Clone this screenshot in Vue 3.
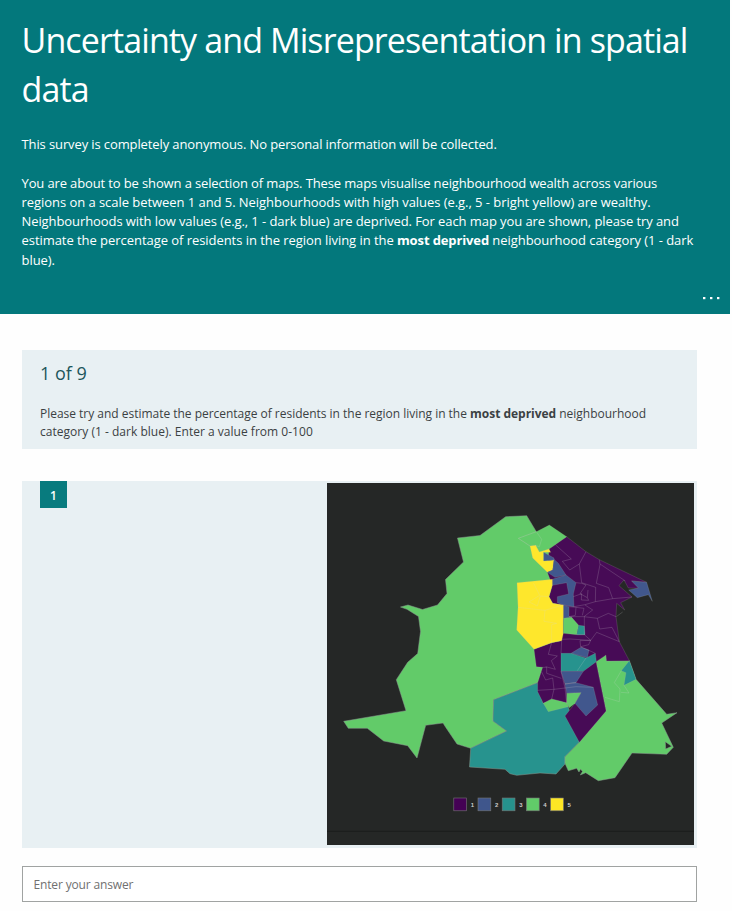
<script setup>
const intro = [
  { t: 'You are about to be shown a selection of maps. These maps visualise neighbourhood wealth across various', c: 'a1' },
  { t: 'regions on a scale between 1 and 5. Neighbourhoods with high values (e.g., 5 - bright yellow) are wealthy.', c: 'a2' },
  { t: 'Neighbourhoods with low values (e.g., 1 - dark blue) are deprived. For each map you are shown, please try and', c: 'a3' },
]
const legend = ['#440154', '#3f568c', '#26928d', '#61cb69', '#fde725']

// Regions drawn on a fine grid: three units per pixel, origin at 500,500
const regions = [
  ['p', '147,147 200,110 258,155 298,179 440,247 395,243 418,265 385,264 372,240 357,257 396,291 362,308 374,330 350,310 348,350 358,425 388,482 320,483 318,465 288,485 318,633 238,727 195,648 225,610 200,610 155,597 130,610 113,575 113,548 128,502 109,500 102,448 155,428 185,422 190,315 158,310 147,290 157,256 142,217'],
  ['g', '55,115 109,95 148,75 200,110 147,147 118,156 107,136 90,138'],
  ['y', '90,138 107,136 118,156 147,147 152,157 131,157 131,182 162,180 158,210 142,217 98,174'],
  ['b', '131,157 162,174 162,180 131,183'],
  ['b', '162,178 175,190 198,225 165,232 142,217 158,210'],
  ['b', '157,238 198,225 228,248 220,282 222,320 190,315 172,308 172,290 206,282 200,248 157,256'],
  ['b', '190,315 207,320 207,350 215,352 190,356'],
  ['b', '395,243 440,247 457,304 445,284 412,293 386,270 415,264'],
  ['y', '51,248 157,238 157,256 147,290 158,310 190,315 190,400 185,422 155,428 102,448 50,390 54,322'],
  ['g', '190,355 215,352 236,376 230,404 190,400'],
  ['t', '236,376 253,378 255,404 230,404'],
  ['b', '213,460 243,442 267,450 262,473'],
  ['t', '183,460 213,460 258,474 286,460 289,485 250,514 183,514'],
  ['b', '183,514 250,514 228,548 195,552'],
  ['b', '195,552 228,548 280,562 293,615 258,648 225,610 243,578 200,580'],
  ['g', '200,580 243,578 225,610 208,623 200,610'],
  ['g', '130,610 155,597 200,608 205,620 145,635'],
  ['t', '388,482 408,538 372,556 378,518 364,512'],
]
const borders = [
  '90,138 55,115 109,95 125,118 118,140 105,136',
  '166,134 214,177 187,184 209,210 238,192 258,155',
  '238,192 245,248 287,262 286,305',
  '298,179 300,194 289,250 326,263 338,296 396,291',
  '300,192 376,243',
  '228,248 245,250 258,255 240,281 262,293 264,270',
  '220,290 245,281 244,300 266,301 262,293',
  '222,320 255,314 286,305 338,296',
  '207,320 228,322 226,346 207,350 252,350 278,330 255,315',
  '228,322 252,325 247,346',
  '252,350 292,355 325,340 348,350',
  '253,350 253,404',
  '292,355 299,387 336,382 358,425 290,397 272,421',
  '230,404 253,404 272,421 240,422 242,440 286,460',
  '185,418 210,417 272,421 266,434 242,440',
  '185,422 183,460', '155,428 145,463 172,468 154,482 166,508 137,500',
  '128,502 140,502 140,520 184,535', '125,516 137,540 158,534 162,568 113,571',
  '162,568 195,564', '183,514 195,564 200,610', '162,568 155,597',
  '195,552 228,548', '258,474 232,512', '195,564 228,560 280,562',
  '54,322 135,331 190,315', '101,250 119,286 87,306 112,318 121,288 146,290',
  '135,331 132,364 170,370 155,374 155,428',
  '364,512 343,548 360,567 358,605 315,592', '372,556 387,579 363,577',
  '349,350 368,336',
]
</script>

<template>
  <main class="page">
    <header class="hero">
      <h1><span class="line">Uncertainty and Misrepresentation in spatial</span><span class="line">data</span></h1>
      <div class="copy">
        <p class="first"><span class="line a0">This survey is completely anonymous. No personal information will be collected.</span></p>
        <p>
          <span v-for="l in intro" :key="l.c" class="line" :class="l.c">{{ l.t }}</span>
          <span class="line a4">estimate the percentage of residents in the region living in the <b>most deprived</b> neighbourhood category (1 - dark</span>
          <span class="line a4">blue).</span>
        </p>
      </div>
      <button class="more" aria-label="More options">
        <svg width="18" height="4" viewBox="0 0 18 4"><rect x="1" y="1" width="2.4" height="2.2" /><rect x="8" y="1" width="2.4" height="2.2" /><rect x="15" y="1" width="2.4" height="2.2" /></svg>
      </button>
    </header>

    <section class="section-card">
      <h2>1 of 9</h2>
      <p>
        <span class="line s1">Please try and estimate the percentage of residents in the region living in the <b>most deprived</b> neighbourhood</span>
        <span class="line s2">category (1 - dark blue). Enter a value from 0-100</span>
      </p>
    </section>

    <section class="question">
      <span class="badge">1</span>
      <svg class="map" width="367" height="362" viewBox="327 483 367 362">
        <rect x="327" y="483" width="367" height="362" fill="#252726" />
        <path d="M327 831.3H694" stroke="#1b1d1c" />
        <g stroke="#8b9b90" stroke-width=".5">
          <polygon class="g" points="505.7,516.7 526.7,515.7 536.3,531.7 549,549 560,580 560,640 545,680 537.7,682.7 493.7,699.7 493,721 506.7,731 470.7,748.3 457,744 445.7,727.3 443,723 425.7,725.3 417,758 407.7,745.7 383.7,741 367.3,728.3 348.3,728.3 343.7,721.3 406,710.7 396.3,679.7 407.7,662.3 417.7,653.5 420.5,631.5 418.5,616.5 407,609.3 400.5,607 408,605 422.5,609.5 437.5,605 447,593.5 445.5,579.5 463.5,562 457.5,538 480,535.5" />
          <polygon class="t" points="470.7,748.3 506.7,731 493,721 493.7,699.7 537.7,682.7 543,703 566,700 579.3,742.3 565,756.7 565,764 556,774 540,773 516.7,775.3 510,773.7 505,769.3 469.5,767" />
          <polygon class="g" points="579.3,742.3 606,711 596,661.7 606,655 606.7,661 629.3,660.7 636,679.3 666.7,714.3 677,712.7 661.7,723 673.3,747.3 666.7,754.3 632,753 615,777.7 598.3,780.7 585.7,772.7 580.3,775 582.5,771.5 580.5,769 579,772 576.7,768.3 568.3,770.7 565,763.3 565,756.7" />
          <polygon fill="#252726" points="665.3,741.7 671.7,746.3 665.7,749" />
        </g>
        <g transform="translate(500 500) scale(.33333)" stroke-width="1.3">
          <polygon v-for="(r, i) in regions" :key="i" :class="r[0]" :points="r[1]" stroke="#aeb0a0" stroke-opacity=".45" />
          <polyline v-for="(b, i) in borders" :key="'b' + i" :points="b" fill="none" stroke="#d5d5d5" stroke-opacity=".34" stroke-width="1.7" />
        </g>
        <g v-for="(c, i) in legend" :key="c">
          <rect :x="453.8 + i * 24.2" y="798" width="12.8" height="12.8" :fill="c" stroke="#777" stroke-width=".6" />
          <text :x="472.4 + i * 24.2" y="807" class="key">{{ i + 1 }}</text>
        </g>
      </svg>
    </section>
    <input class="answer" type="text" placeholder="Enter your answer" />
  </main>
</template>

<style>
body { margin: 0; background: #fefefe; }
</style>

<style scoped>
.page { box-sizing: border-box; height: 911px; overflow: hidden; display: flex; flex-direction: column; font-family: "Open Sans", "Noto Sans", sans-serif; }
.line { display: block; width: max-content; white-space: nowrap; }
h1, h2, p { margin: 0; font-weight: 400; }
.hero { box-sizing: border-box; width: 730px; height: 314px; flex: none; padding: 16px 10px 0 21.5px; background: #03787c; color: #fff; display: flex; flex-direction: column; }
h1 { font-size: 34px; line-height: 49px; letter-spacing: -0.89px; }
.copy { margin-top: 21px; font-size: 13px; line-height: 19.3px; }
.first { margin-bottom: 19.3px; }
.a0 { letter-spacing: -0.11px; }
.a1 { letter-spacing: -0.13px; }
.a2 { letter-spacing: -0.05px; }
.a3 { letter-spacing: -0.085px; }
.a4 { letter-spacing: -0.05px; }
.a4 b { letter-spacing: -0.12px; }
.more { align-self: flex-end; margin-top: 26px; padding: 0; border: 0; background: none; display: flex; fill: #fff; }
.section-card { box-sizing: border-box; width: 675px; height: 99px; flex: none; margin: 36px 0 0 22px; padding: 10px 18px; background: #e8f0f3; color: #3b4143; }
h2 { font-size: 18px; line-height: 27px; color: #1c565b; }
.section-card p { margin-top: 18px; font-size: 12px; line-height: 18.3px; }
.s1 { letter-spacing: -0.02px; }
.s2 { letter-spacing: 0.02px; }
.question { box-sizing: border-box; width: 675px; height: 367px; flex: none; margin: 32px 0 0 22px; padding: 0 3px 0 18px; background: #e8f0f3; display: flex; justify-content: space-between; }
.badge { width: 27px; height: 27px; background: #087b7e; color: #fff; font-size: 12px; font-weight: 600; line-height: 29px; text-align: center; }
.map { display: block; margin-top: 2px; }
.p { fill: #470b56; }
.b { fill: #41578d; }
.t { fill: #27938e; }
.g { fill: #62cb69; }
.y { fill: #fee72c; }
.key { fill: #ccc; font: bold 6px "Liberation Sans", sans-serif; text-anchor: middle; }
.answer { box-sizing: border-box; width: 675px; height: 36px; flex: none; margin: 18px 0 0 22px; padding: 0 10.5px; border: 1px solid #a0a3a2; background: #fff; font: 12px "Open Sans", "Noto Sans", sans-serif; letter-spacing: -0.15px; }
.answer::placeholder { color: #707070; opacity: 1; }
</style>
